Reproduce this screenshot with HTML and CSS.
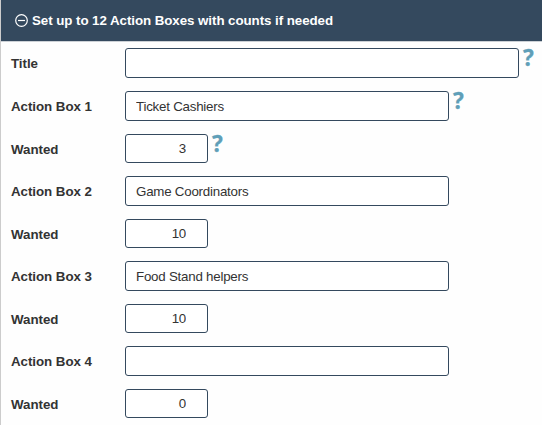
FILE: index.html
```html
<!DOCTYPE html>
<html lang="en">
<head>
    <meta charset="UTF-8">
    <meta name="viewport" content="width=device-width, initial-scale=1.0">
    <title>Action Boxes</title>
    <link rel="stylesheet" href="styles.css">
</head>
<body>
    <form class="panel">
        <div class="panel-header">
            <svg class="collapse-icon" viewBox="0 0 13 13">
                <circle cx="6.5" cy="6.5" r="5.8"/>
                <path d="M3 6.5h7"/>
            </svg>
            <span>Set up to 12 Action Boxes with counts if needed</span>
        </div>
        <div class="row">
            <label for="title">Title</label>
            <input type="text" id="title" class="title">
            <span class="help">?</span>
        </div>
        <div class="row">
            <label for="box1">Action Box 1</label>
            <input type="text" id="box1" value="Ticket Cashiers">
            <span class="help">?</span>
        </div>
        <div class="row wanted">
            <label for="wanted1">Wanted</label>
            <input type="text" id="wanted1" value="3">
            <span class="help">?</span>
        </div>
        <div class="row">
            <label for="box2">Action Box 2</label>
            <input type="text" id="box2" value="Game Coordinators">
        </div>
        <div class="row wanted">
            <label for="wanted2">Wanted</label>
            <input type="text" id="wanted2" value="10">
        </div>
        <div class="row">
            <label for="box3">Action Box 3</label>
            <input type="text" id="box3" value="Food Stand helpers">
        </div>
        <div class="row wanted">
            <label for="wanted3">Wanted</label>
            <input type="text" id="wanted3" value="10">
        </div>
        <div class="row">
            <label for="box4">Action Box 4</label>
            <input type="text" id="box4">
        </div>
        <div class="row wanted">
            <label for="wanted4">Wanted</label>
            <input type="text" id="wanted4" value="0">
        </div>
    </form>
</body>
</html>
```
FILE: styles.css
```css
body {
    margin: 0;
    background-color: #fefefe;
    font-family: "Liberation Sans", Arial, sans-serif;
    font-size: 13.333px;
    color: #333;
    overflow: hidden;
}
.panel {
    box-sizing: border-box;
    height: 425px;
    border-left: 1px solid #ccc;
}
.panel-header {
    display: flex;
    align-items: center;
    box-sizing: border-box;
    height: 42px;
    margin-bottom: 6px;
    padding: 0 14px 1px;
    border-bottom: 1px solid #ccd1d6;
    background-color: #34495e;
    color: #fff;
    font-weight: bold;
    letter-spacing: -0.06px;
}
.collapse-icon {
    width: 13px;
    height: 13px;
    margin-right: 4px;
    fill: none;
    stroke: #fff;
    stroke-width: 1.2;
}
.row {
    display: flex;
    align-items: flex-start;
    height: 43px;
    padding-left: 10px;
}
.row label {
    width: 114px;
    line-height: 32px;
    font-weight: bold;
    letter-spacing: -0.05px;
}
.row input {
    box-sizing: border-box;
    width: 324px;
    height: 30px;
    padding: 0 10px;
    border: 1px solid #34495e;
    border-radius: 3px;
    background-color: #fff;
    color: #333;
    font: inherit;
    letter-spacing: -0.23px;
}
.row input.title {
    width: 394px;
}
.wanted {
    height: 42px;
}
.wanted input {
    width: 83px;
    height: 29px;
    padding-right: 21px;
    text-align: right;
}
.help {
    margin-left: 4px;
    color: #5f9fb8;
    font: bold 22.5px/19px "Noto Sans", sans-serif;
    -webkit-text-stroke: 0.3px #5f9fb8;
}
```
